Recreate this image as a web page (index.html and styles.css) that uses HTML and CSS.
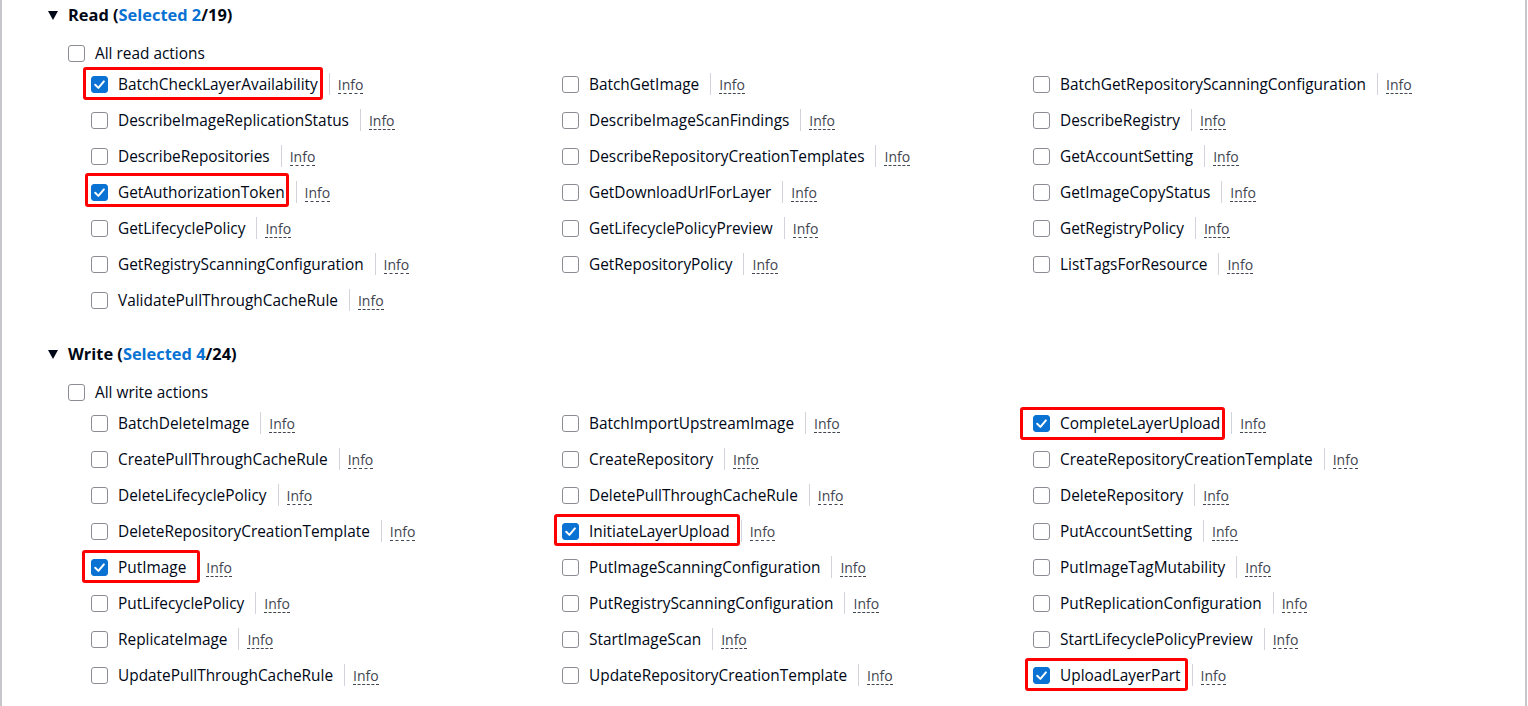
FILE: index.html
```html
<!DOCTYPE html>
<html>
<head>
<meta charset="utf-8">
<link rel="stylesheet" href="styles.css">
</head>
<body>
<div class="panel">
  <section class="group">
    <div class="group-head"><span class="caret"></span><span class="title">Read (<span class="sel">Selected 2</span>/19)</span></div>
    <div class="all-row"><span class="cb"></span><span class="lbl">All read actions</span></div>
    <div class="grid">
      <div class="item"><span class="opt hl hl-a"><span class="cb on"><svg viewBox="0 0 17 17"><path d="M4.2 8.8 L7.4 11.9 L12.9 5.4"/></svg></span><span class="lbl">BatchCheckLayerAvailability</span></span><span class="sep"></span><a class="info">Info</a></div>
      <div class="item"><span class="opt"><span class="cb"></span><span class="lbl">BatchGetImage</span></span><span class="sep"></span><a class="info">Info</a></div>
      <div class="item"><span class="opt"><span class="cb"></span><span class="lbl">BatchGetRepositoryScanningConfiguration</span></span><span class="sep"></span><a class="info">Info</a></div>
      <div class="item"><span class="opt"><span class="cb"></span><span class="lbl">DescribeImageReplicationStatus</span></span><span class="sep"></span><a class="info">Info</a></div>
      <div class="item"><span class="opt"><span class="cb"></span><span class="lbl">DescribeImageScanFindings</span></span><span class="sep"></span><a class="info">Info</a></div>
      <div class="item"><span class="opt"><span class="cb"></span><span class="lbl">DescribeRegistry</span></span><span class="sep"></span><a class="info">Info</a></div>
      <div class="item"><span class="opt"><span class="cb"></span><span class="lbl">DescribeRepositories</span></span><span class="sep"></span><a class="info">Info</a></div>
      <div class="item"><span class="opt"><span class="cb"></span><span class="lbl">DescribeRepositoryCreationTemplates</span></span><span class="sep"></span><a class="info">Info</a></div>
      <div class="item"><span class="opt"><span class="cb"></span><span class="lbl">GetAccountSetting</span></span><span class="sep"></span><a class="info">Info</a></div>
      <div class="item"><span class="opt hl hl-b"><span class="cb on"><svg viewBox="0 0 17 17"><path d="M4.2 8.8 L7.4 11.9 L12.9 5.4"/></svg></span><span class="lbl">GetAuthorizationToken</span></span><span class="sep"></span><a class="info">Info</a></div>
      <div class="item"><span class="opt"><span class="cb"></span><span class="lbl">GetDownloadUrlForLayer</span></span><span class="sep"></span><a class="info">Info</a></div>
      <div class="item"><span class="opt"><span class="cb"></span><span class="lbl">GetImageCopyStatus</span></span><span class="sep"></span><a class="info">Info</a></div>
      <div class="item"><span class="opt"><span class="cb"></span><span class="lbl">GetLifecyclePolicy</span></span><span class="sep"></span><a class="info">Info</a></div>
      <div class="item"><span class="opt"><span class="cb"></span><span class="lbl">GetLifecyclePolicyPreview</span></span><span class="sep"></span><a class="info">Info</a></div>
      <div class="item"><span class="opt"><span class="cb"></span><span class="lbl">GetRegistryPolicy</span></span><span class="sep"></span><a class="info">Info</a></div>
      <div class="item"><span class="opt"><span class="cb"></span><span class="lbl">GetRegistryScanningConfiguration</span></span><span class="sep"></span><a class="info">Info</a></div>
      <div class="item"><span class="opt"><span class="cb"></span><span class="lbl">GetRepositoryPolicy</span></span><span class="sep"></span><a class="info">Info</a></div>
      <div class="item"><span class="opt"><span class="cb"></span><span class="lbl">ListTagsForResource</span></span><span class="sep"></span><a class="info">Info</a></div>
      <div class="item"><span class="opt"><span class="cb"></span><span class="lbl">ValidatePullThroughCacheRule</span></span><span class="sep"></span><a class="info">Info</a></div>
    </div>
  </section>
  <section class="group write">
    <div class="group-head"><span class="caret"></span><span class="title">Write (<span class="sel">Selected 4</span>/24)</span></div>
    <div class="all-row"><span class="cb"></span><span class="lbl">All write actions</span></div>
    <div class="grid">
      <div class="item"><span class="opt"><span class="cb"></span><span class="lbl">BatchDeleteImage</span></span><span class="sep"></span><a class="info">Info</a></div>
      <div class="item"><span class="opt"><span class="cb"></span><span class="lbl">BatchImportUpstreamImage</span></span><span class="sep"></span><a class="info">Info</a></div>
      <div class="item"><span class="opt hl hl-c"><span class="cb on"><svg viewBox="0 0 17 17"><path d="M4.2 8.8 L7.4 11.9 L12.9 5.4"/></svg></span><span class="lbl">CompleteLayerUpload</span></span><span class="sep"></span><a class="info">Info</a></div>
      <div class="item"><span class="opt"><span class="cb"></span><span class="lbl">CreatePullThroughCacheRule</span></span><span class="sep"></span><a class="info">Info</a></div>
      <div class="item"><span class="opt"><span class="cb"></span><span class="lbl">CreateRepository</span></span><span class="sep"></span><a class="info">Info</a></div>
      <div class="item"><span class="opt"><span class="cb"></span><span class="lbl">CreateRepositoryCreationTemplate</span></span><span class="sep"></span><a class="info">Info</a></div>
      <div class="item"><span class="opt"><span class="cb"></span><span class="lbl">DeleteLifecyclePolicy</span></span><span class="sep"></span><a class="info">Info</a></div>
      <div class="item"><span class="opt"><span class="cb"></span><span class="lbl">DeletePullThroughCacheRule</span></span><span class="sep"></span><a class="info">Info</a></div>
      <div class="item"><span class="opt"><span class="cb"></span><span class="lbl">DeleteRepository</span></span><span class="sep"></span><a class="info">Info</a></div>
      <div class="item"><span class="opt"><span class="cb"></span><span class="lbl">DeleteRepositoryCreationTemplate</span></span><span class="sep"></span><a class="info">Info</a></div>
      <div class="item"><span class="opt hl hl-d"><span class="cb on"><svg viewBox="0 0 17 17"><path d="M4.2 8.8 L7.4 11.9 L12.9 5.4"/></svg></span><span class="lbl">InitiateLayerUpload</span></span><span class="sep"></span><a class="info">Info</a></div>
      <div class="item"><span class="opt"><span class="cb"></span><span class="lbl">PutAccountSetting</span></span><span class="sep"></span><a class="info">Info</a></div>
      <div class="item"><span class="opt hl hl-e"><span class="cb on"><svg viewBox="0 0 17 17"><path d="M4.2 8.8 L7.4 11.9 L12.9 5.4"/></svg></span><span class="lbl">PutImage</span></span><span class="sep"></span><a class="info">Info</a></div>
      <div class="item"><span class="opt"><span class="cb"></span><span class="lbl">PutImageScanningConfiguration</span></span><span class="sep"></span><a class="info">Info</a></div>
      <div class="item"><span class="opt"><span class="cb"></span><span class="lbl">PutImageTagMutability</span></span><span class="sep"></span><a class="info">Info</a></div>
      <div class="item"><span class="opt"><span class="cb"></span><span class="lbl">PutLifecyclePolicy</span></span><span class="sep"></span><a class="info">Info</a></div>
      <div class="item"><span class="opt"><span class="cb"></span><span class="lbl">PutRegistryScanningConfiguration</span></span><span class="sep"></span><a class="info">Info</a></div>
      <div class="item"><span class="opt"><span class="cb"></span><span class="lbl">PutReplicationConfiguration</span></span><span class="sep"></span><a class="info">Info</a></div>
      <div class="item"><span class="opt"><span class="cb"></span><span class="lbl">ReplicateImage</span></span><span class="sep"></span><a class="info">Info</a></div>
      <div class="item"><span class="opt"><span class="cb"></span><span class="lbl">StartImageScan</span></span><span class="sep"></span><a class="info">Info</a></div>
      <div class="item"><span class="opt"><span class="cb"></span><span class="lbl">StartLifecyclePolicyPreview</span></span><span class="sep"></span><a class="info">Info</a></div>
      <div class="item"><span class="opt"><span class="cb"></span><span class="lbl">UpdatePullThroughCacheRule</span></span><span class="sep"></span><a class="info">Info</a></div>
      <div class="item"><span class="opt"><span class="cb"></span><span class="lbl">UpdateRepositoryCreationTemplate</span></span><span class="sep"></span><a class="info">Info</a></div>
      <div class="item"><span class="opt hl hl-f"><span class="cb on"><svg viewBox="0 0 17 17"><path d="M4.2 8.8 L7.4 11.9 L12.9 5.4"/></svg></span><span class="lbl">UploadLayerPart</span></span><span class="sep"></span><a class="info">Info</a></div>
    </div>
  </section>
</div>
</body>
</html>
```

FILE: styles.css
```css
* { box-sizing: border-box; }
html, body { margin: 0; padding: 0; background: #ffffff; }
body {
  font-family: "Open Sans", "Noto Sans", Arial, sans-serif;
  color: #000716;
  font-size: 15.4px;
  overflow: hidden;
}
.panel {
  width: 1527px;
  height: 706px;
  border-left: 2px solid #c6c6cd;
  border-right: 2px solid #c6c6cd;
  padding-left: 46px;
}
.group-head {
  height: 30px;
  display: flex;
  align-items: center;
}
.write { margin-top: 21px; }
.caret {
  width: 0; height: 0;
  border-left: 5.5px solid transparent;
  border-right: 5.5px solid transparent;
  border-top: 9px solid #000716;
  margin-right: 10px;
  margin-top: 1px;
}
.title {
  font-size: 16.4px;
  font-weight: 700;
  line-height: 20px;
}
.sel { color: #0972d3; }
.all-row {
  margin-top: 9px;
  height: 28px;
  display: flex;
  align-items: center;
  padding-left: 20px;
}
.cb {
  width: 17px; height: 17px;
  border: 1.5px solid #8c8c94;
  border-radius: 3px;
  background: #fff;
  flex: none;
  display: inline-flex;
  align-items: center;
  justify-content: center;
}
.cb.on {
  background: #0972d3;
  border-color: #0972d3;
}
.cb svg {
  width: 17px; height: 17px;
  flex: none;
  margin: -1.5px;
}
.cb svg path {
  fill: none;
  stroke: #fff;
  stroke-width: 2;
  stroke-linecap: round;
  stroke-linejoin: round;
}
.lbl {
  margin-left: 10px;
  line-height: 20px;
  padding-top: 2px;
  white-space: nowrap;
}
.grid {
  display: grid;
  grid-template-columns: repeat(3, 471px);
  grid-auto-rows: 36px;
  padding-left: 43px;
  margin-top: -1px;
}
.item {
  display: flex;
  align-items: center;
}
.opt {
  display: inline-flex;
  align-items: center;
  height: 20px;
  position: relative;
}
.sep {
  width: 1px;
  height: 22px;
  background: #d1d5db;
  margin-left: 11px;
}
.info {
  margin-left: 8px;
  font-size: 14px;
  color: #424650;
  line-height: 17px;
  border-bottom: 1px dashed #424650;
  margin-top: 2px;
}
.hl::after {
  content: "";
  position: absolute;
  left: -8px; right: -5px; top: -7px; bottom: -6px;
  border: 3px solid #ff0000;
  border-radius: 3px;
}
.hl-b::after { left: -6px; right: -4px; top: -9px; bottom: -5px; }
.hl-c::after { left: -13px; right: -5px; top: -6px; bottom: -7px; }
.hl-d::after { left: -8px; right: -10px; top: -7px; bottom: -5px; }
.hl-e::after { left: -9px; right: -14px; top: -7px; bottom: -6px; }
.hl-f::after { left: -8px; right: -7px; top: -7px; bottom: -6px; }
```
